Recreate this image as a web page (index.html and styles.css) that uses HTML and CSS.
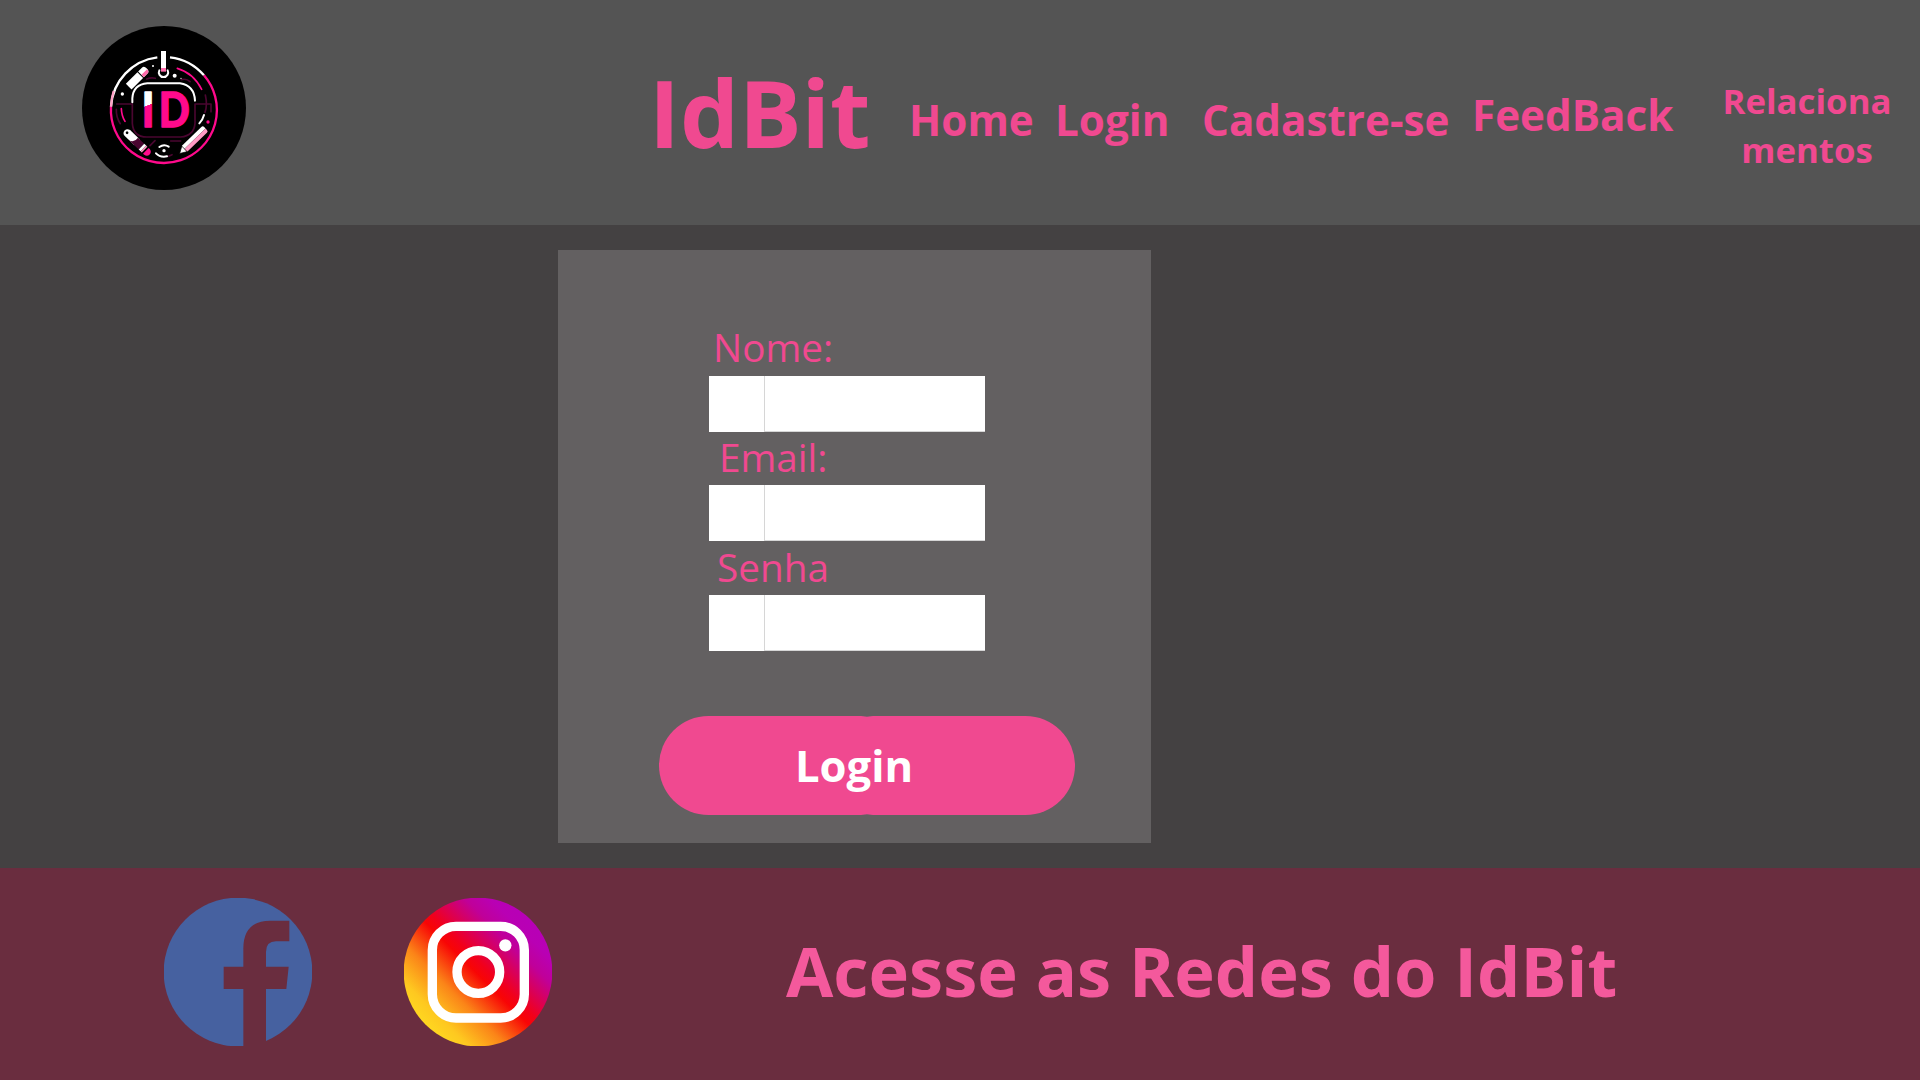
FILE: index.html
```html
<!DOCTYPE html>
<html lang="pt-BR">
<head>
<meta charset="utf-8">
<title>IdBit - Login</title>
<link rel="stylesheet" href="styles.css">
</head>
<body>
<header class="header">
  <svg class="logo" viewBox="36 33 492 492" fill="none" stroke-linecap="round" stroke-linejoin="round">
    <defs>
      <linearGradient id="split" gradientUnits="userSpaceOnUse" x1="229" y1="232" x2="244" y2="272">
        <stop offset=".88" stop-color="#fff"/><stop offset=".9" stop-color="#ff0a8c"/>
      </linearGradient>
    </defs>
    <circle cx="282" cy="279" r="246" fill="#000"/>
    <g stroke="#4a0630" stroke-width="5">
      <path d="M140 267H187V325Q190 366 230 366H332Q372 362 375 325V267H423M423 267V290M406 240Q413 270 405 292M139 283Q138 307 151 326M230 192Q244 186 256 190M334 194Q350 190 360 200M240 392L255 377M302 378H332M296 424L306 419"/>
    </g>
    <path d="M123 275A159 159 0 0 1 262 127M300 127A159 159 0 0 1 402 181" stroke="#fff" stroke-width="7" stroke-linecap="butt"/>
    <path d="M402 181A159 159 0 1 1 123 275" stroke="#ff0a8c" stroke-width="7" stroke-linecap="butt"/>
    <path d="M123 275Q124 250 131 228" stroke="#ffa0c4" stroke-width="7" stroke-linecap="butt"/>
    <path d="M187 262V250Q190 208 232 205H330Q373 212 375 257" stroke="#fff" stroke-width="6"/>
    <path d="M322 160Q370 174 395 223M154 281Q155 303 165 319" stroke="#ff0a8c" stroke-width="5"/>
    <path d="M402 300Q398 315 388 325M268 396Q282 386 296 395M258 415Q270 428 291 424" stroke="#fff" stroke-width="6"/>
    <path d="M273 108H288V159H273Z" fill="#fff"/>
    <path d="M273 159H288V170H273Z" fill="#ff6aaa"/>
    <path d="M268 166A14 14 0 1 0 293 166" stroke="#fff" stroke-width="6"/>
    <g transform="translate(203 188) rotate(-45)">
      <rect x="-38" y="-12" width="49" height="24" fill="#fff"/>
      <path d="M14-12H31Q39-12 39 0Q39 12 31 12H14Z" fill="#fff"/>
      <path d="M14 2H38Q37 12 31 12H14Z" fill="#ff6aaa"/>
    </g>
    <g transform="translate(370 376) rotate(-44)">
      <path d="M-36-12H45Q51-12 51-6V0H-44Z" fill="#fff"/>
      <path d="M-44 0H51V6Q51 12 45 12H-36Z" fill="#ff9ac4"/>
      <path d="M-38-11L-57 0L-38 11Z" fill="#fff" stroke="#000" stroke-width="2"/>
    </g>
    <g transform="translate(200 381) rotate(44)">
      <path d="M-39-12H2V12H-39Q-50 10-50 0Q-50-10-39-12Z" fill="#fff"/>
      <path d="M-6-12H20V12H-22Q-3 10-6-12Z" fill="#4a0630"/>
      <path d="M20-12H28V12H20Z" fill="#fff"/><path d="M28-12H33V12H28Z" fill="#ff9ac4"/>
      <path d="M38-12H43Q54-10 54 0Q54 10 43 12H38Z" fill="#ff0a8c"/>
      <circle cx="-40" cy="0" r="4" fill="#000"/>
    </g>
    <g fill="#fff">
      <circle cx="157" cy="237" r="5"/><circle cx="314" cy="182" r="6"/><circle cx="249" cy="153" r="3"/>
      <circle cx="333" cy="190" r="2"/><circle cx="282" cy="407" r="5"/>
    </g>
    <circle cx="414" cy="321" r="5" fill="#ff0a8c"/>
    <text class="logo-letter" x="215" y="336" textLength="38" lengthAdjust="spacingAndGlyphs" fill="url(#split)" stroke="url(#split)">I</text>
    <text class="logo-letter" x="266" y="336" textLength="93" lengthAdjust="spacingAndGlyphs" fill="#ff0a8c" stroke="#ff0a8c">D</text>
  </svg>
  <h1 class="brand">IdBit</h1>
  <nav class="nav">
    <a class="nav-link">Home</a>
    <a class="nav-link">Login</a>
    <a class="nav-link">Cadastre-se</a>
    <a class="nav-link nav-feedback">FeedBack</a>
    <a class="nav-link nav-relations">Relaciona<br>mentos</a>
  </nav>
</header>

<main class="main">
  <form class="card">
    <label class="label label-name" for="nome">Nome:</label>
    <div class="field"><span class="addon"></span><input class="input" id="nome" type="text"></div>
    <label class="label label-email" for="email">Email:</label>
    <div class="field"><span class="addon"></span><input class="input" id="email" type="email"></div>
    <label class="label label-password" for="senha">Senha</label>
    <div class="field"><span class="addon"></span><input class="input" id="senha" type="password"></div>
    <button class="submit" type="button">Login</button>
  </form>
</main>

<footer class="footer">
  <svg class="social" viewBox="42 53 444 444">
    <defs>
      <clipPath id="disc"><circle cx="264" cy="275" r="223"/></clipPath>
    </defs>
    <g clip-path="url(#disc)">
      <path class="fb-disc" d="M42 53H486V497H348V326H409L416 259H348V215Q348 183 378 183H418V121H360Q280 122 280 205V259H221V326H280V497H42Z"/>
    </g>
  </svg>
  <svg class="social" viewBox="42 53 444 444">
    <defs>
      <linearGradient id="ig" gradientUnits="userSpaceOnUse" x1="95" y1="445" x2="432" y2="105">
        <stop offset="0" stop-color="#ffdc20"/>
        <stop offset=".13" stop-color="#fec820"/>
        <stop offset=".3" stop-color="#fb8418"/>
        <stop offset=".49" stop-color="#f80505"/>
        <stop offset=".55" stop-color="#f2001a"/>
        <stop offset=".77" stop-color="#c00099"/>
        <stop offset=".88" stop-color="#b900b4"/>
        <stop offset="1" stop-color="#b700b8"/>
      </linearGradient>
    </defs>
    <circle cx="264" cy="275" r="223" fill="url(#ig)"/>
    <g fill="none" stroke="#fff" stroke-width="28">
      <rect x="127" y="138" width="276" height="275" rx="71"/>
      <circle cx="265" cy="275" r="64"/>
    </g>
    <circle cx="346" cy="195" r="18.500" fill="#fff"/>
  </svg>
  <p class="footer-text">Acesse as Redes do IdBit</p>
</footer>
</body>
</html>
```

FILE: styles.css
```css
* {
  box-sizing: border-box;
}

body {
  margin: 0;
  width: 1920px;
  height: 1080px;
  display: flex;
  flex-direction: column;
  overflow: hidden;
  background: #444142;
  color: #f04990;
  font-family: "Open Sans", "Noto Sans", sans-serif;
}

/* Header */
.header {
  display: flex;
  align-items: flex-start;
  height: 225px;
  flex: none;
  padding-left: 82px;
  background: #545454;
}

.logo {
  width: 164px;
  height: 164px;
  margin-top: 26px;
  flex: none;
}

.logo-letter {
  font-family: Lato, sans-serif;
  font-weight: 900;
  font-size: 142px;
  stroke-width: 4px;
}

.brand {
  width: 260px;
  flex: none;
  margin: 46px 0 0 402px;
  padding-left: 1px;
  font-size: 93.300px;
  font-weight: 700;
  line-height: 132px;
}

.nav {
  display: grid;
  grid-template-columns: 146px 147px 270px 236px 200px;
  align-items: start;
  padding-left: 1px;
}

.nav-link {
  margin-top: 90px;
  font-size: 42.200px;
  font-weight: 700;
  line-height: 60px;
  white-space: nowrap;
}

.nav-feedback {
  margin-top: 85px;
}

.nav-relations {
  margin-top: 76px;
  font-size: 34.800px;
  line-height: 49px;
  width: 198px;
  text-align: center;
}

/* Login form */
.main {
  height: 643px;
  flex: none;
  padding: 25px 0 0 558px;
}

.card {
  display: flex;
  flex-direction: column;
  align-items: flex-start;
  width: 593px;
  height: 593px;
  padding: 70px 0 0 151px;
  background: #636061;
}

.label {
  font-size: 38.700px;
  line-height: 55px;
}

.label-name {
  height: 56px;
  padding-left: 4px;
}

.label-email {
  height: 54px;
  padding-left: 10px;
  line-height: 53px;
}

.label-password {
  height: 55px;
  padding-left: 8px;
  line-height: 54px;
}

.field {
  display: flex;
  width: 276px;
  height: 56px;
  margin-bottom: -1px;
}

.addon {
  width: 55px;
  background: #fff;
}

.input {
  flex: 1;
  min-width: 0;
  padding: 0 12px;
  border: solid #d6d6d6;
  border-width: 0 0 1px 1px;
  border-radius: 0;
  background: #fff;
  font: inherit;
  font-size: 24px;
}

.submit {
  position: relative;
  width: 416px;
  height: 99px;
  margin: 66px 0 0 -50px;
  padding: 0 26px 2px 0;
  border: 0;
  border-radius: 50px;
  background: #f04990;
  color: #fff;
  font-family: inherit;
  font-size: 43.600px;
  font-weight: 700;
  line-height: 62px;
}

/* Seam where the two halves of the pill meet */
.submit::before,
.submit::after {
  content: "";
  position: absolute;
  left: 202px;
  width: 12px;
  height: 1px;
  background: linear-gradient(90deg, transparent, #8a5870, transparent);
}

.submit::before {
  top: 0;
}

.submit::after {
  bottom: 0;
}

/* Footer */
.footer {
  display: flex;
  align-items: flex-start;
  gap: 92px;
  height: 212px;
  flex: none;
  padding: 30px 0 0 164px;
  background: #6a2d3f;
}

.social {
  width: 148px;
  height: 148px;
  flex: none;
}

.fb-disc {
  fill: #4661a0;
}

.footer-text {
  margin: 25px 0 0 142px;
  color: #f4599c;
  font-size: 68.600px;
  font-weight: 700;
  line-height: 96px;
  white-space: nowrap;
}
```
